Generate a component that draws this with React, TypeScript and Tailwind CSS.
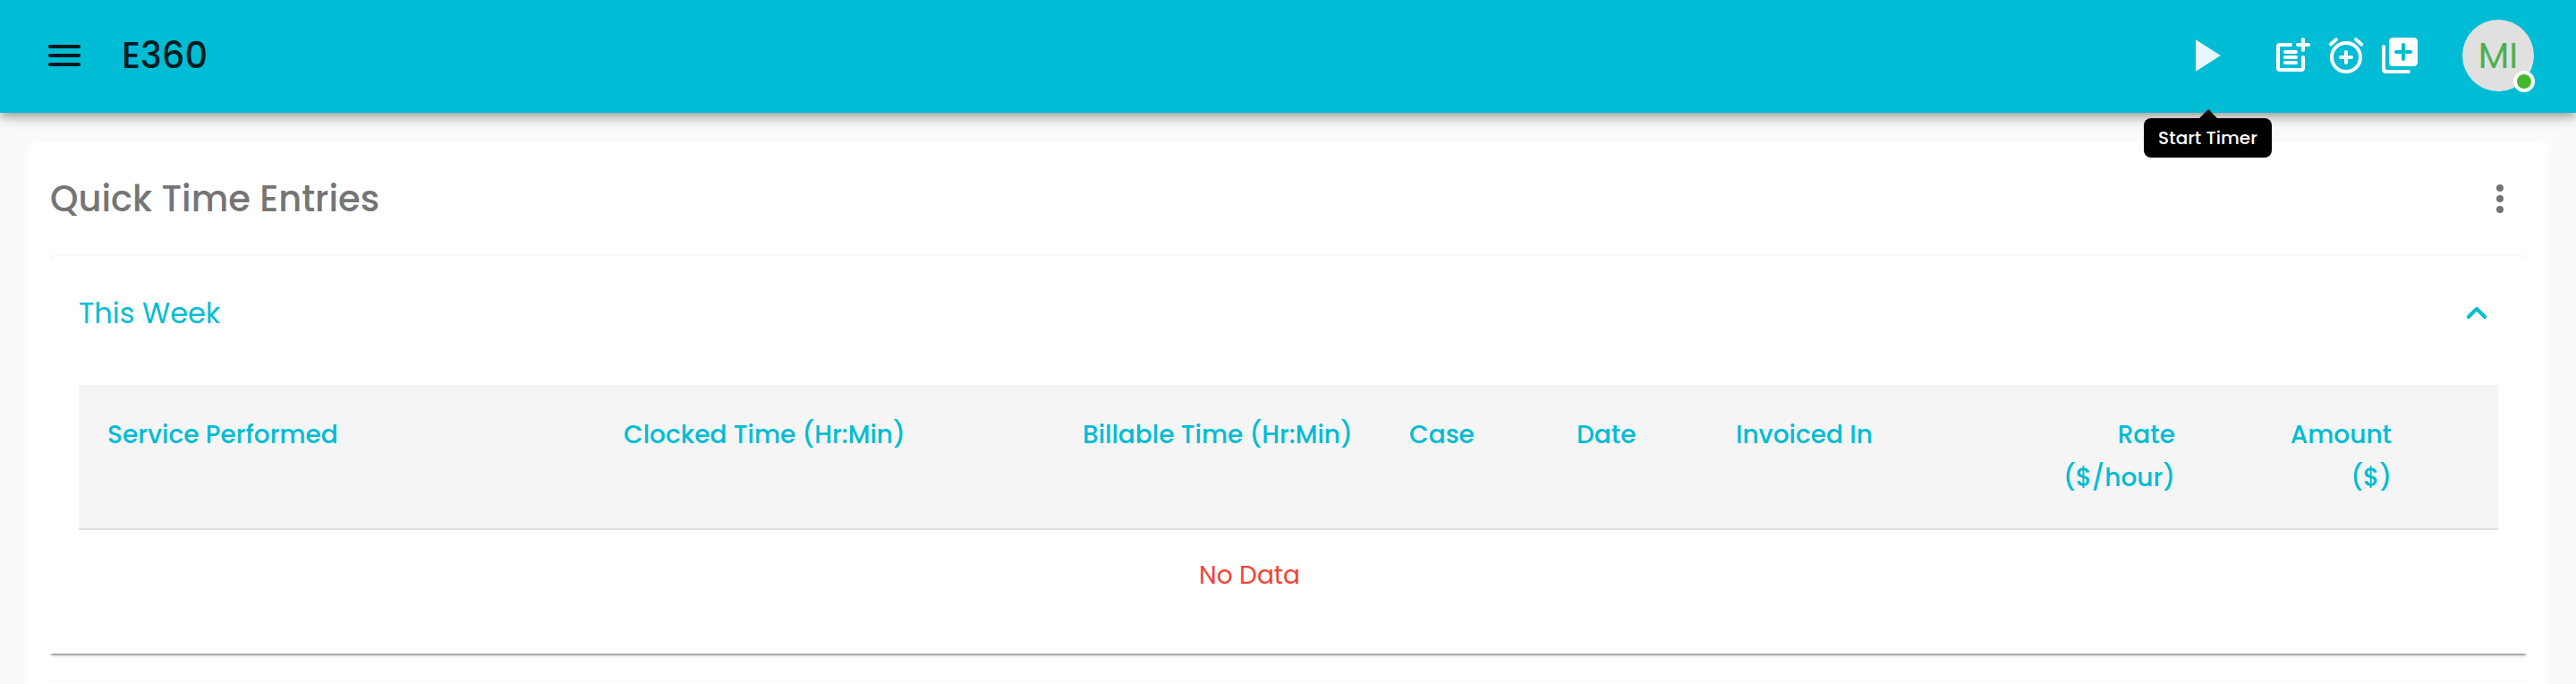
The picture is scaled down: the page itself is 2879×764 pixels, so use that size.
import type { ReactNode } from "react";

function Icon({ className = "", children }: { className?: string; children: ReactNode }) {
  return (
    <svg viewBox="0 0 24 24" className={`size-12 shrink-0 ${className}`} fill="currentColor" aria-hidden="true">
      {children}
    </svg>
  );
}

function MenuIcon() {
  return (
    <Icon className="text-black/87">
      <path d="M4 18h16c.55 0 1-.45 1-1s-.45-1-1-1H4c-.55 0-1 .45-1 1s.45 1 1 1zm0-5h16c.55 0 1-.45 1-1s-.45-1-1-1H4c-.55 0-1 .45-1 1s.45 1 1 1zM3 7c0 .55.45 1 1 1h16c.55 0 1-.45 1-1s-.45-1-1-1H4c-.55 0-1 .45-1 1z" />
    </Icon>
  );
}

function PostAddIcon() {
  return (
    <Icon>
      <path
        d="M11 6H5a1 1 0 0 0-1 1v12a1 1 0 0 0 1 1h12a1 1 0 0 0 1-1v-6M8 10h6M8 13h6M8 16h6M15 6h6M18 3v6"
        fill="none"
        stroke="currentColor"
        strokeWidth="2"
        strokeLinecap="round"
      />
    </Icon>
  );
}

function AlarmAddIcon() {
  return (
    <Icon>
      <g fill="none" stroke="currentColor" strokeWidth="2" strokeLinecap="round">
        <circle cx="12" cy="13" r="8" />
        <path d="M9 13h6M12 10v6M3.4 5.8 6.5 3.1M20.6 5.8 17.5 3.1" />
      </g>
    </Icon>
  );
}

function LibraryAddIcon() {
  return (
    <Icon>
      <path d="M3 6c-.55 0-1 .45-1 1v13c0 1.1.9 2 2 2h13c.55 0 1-.45 1-1s-.45-1-1-1H5c-.55 0-1-.45-1-1V7c0-.55-.45-1-1-1zm17-4H8c-1.1 0-2 .9-2 2v12c0 1.1.9 2 2 2h12c1.1 0 2-.9 2-2V4c0-1.1-.9-2-2-2zm-2 9h-3v3c0 .55-.45 1-1 1s-1-.45-1-1v-3h-3c-.55 0-1-.45-1-1s.45-1 1-1h3V6c0-.55.45-1 1-1s1 .45 1 1v3h3c.55 0 1 .45 1 1s-.45 1-1 1z" />
    </Icon>
  );
}

function StartTimer() {
  return (
    <button type="button" aria-label="Start Timer" className="relative flex w-7 items-center justify-center">
      <svg viewBox="0 0 28 36" className="h-9 w-7 text-white/90" fill="currentColor" aria-hidden="true">
        <path d="M0 .3v35.4L27.8 18z" />
      </svg>
      <span className="absolute top-[88px] -left-[58px] flex h-11 w-[143px] items-center justify-center rounded-lg bg-black text-[20px] leading-none font-medium whitespace-nowrap text-white">
        <span className="absolute -top-[7px] left-[65px] size-[14px] rotate-45 bg-black" />
        <span className="relative">Start Timer</span>
      </span>
    </button>
  );
}

function Header() {
  return (
    <header className="relative z-10 flex h-[126px] items-center bg-[#00bcd4] pr-[47px] pb-[2px] pl-12 shadow-[0_4px_8px_-2px_rgba(0,0,0,0.2),0_8px_10px_0_rgba(0,0,0,0.14),0_2px_20px_0_rgba(0,0,0,0.12)]">
      <MenuIcon />
      <h1 className="ml-10 text-[40px] leading-[64px] font-medium text-black/87">E360</h1>
      <div className="ml-auto flex h-9 items-center text-white">
        <StartTimer />
        <div className="ml-14 flex gap-3">
          <PostAddIcon />
          <AlarmAddIcon />
          <LibraryAddIcon />
        </div>
        <div className="relative ml-[46px] flex size-20 items-center justify-center rounded-full bg-[#e0e0e0] text-[40px] leading-none text-[#4caf50]">
          MI
          <span className="absolute -right-[1px] -bottom-[1px] size-6 rounded-full border-4 border-white bg-[#44b72b]" />
        </div>
      </div>
    </header>
  );
}

const columns = [
  { label: "Service Performed", className: "w-[577px] pl-8" },
  { label: "Clocked Time (Hr:Min)", className: "w-[513px] pl-8" },
  { label: "Billable Time (Hr:Min)", className: "w-[365px] pl-8" },
  { label: "Case", className: "w-[187px] pl-8" },
  { label: "Date", className: "w-[178px] pl-8" },
  { label: "Invoiced In", className: "w-[313px] pl-8" },
  { label: "Rate", unit: "($/hour)", className: "w-[242px] pr-8 text-right" },
  { label: "Amount", unit: "($)", className: "w-[242px] pr-8 text-right" },
];

function TimeTable() {
  return (
    <div className="text-[28px] leading-[48px]">
      <div className="flex h-[162px] border-b-2 border-[#e0e0e0] bg-[#f5f5f5] py-8 font-medium text-[#00bcd4]">
        {columns.map(({ label, unit, className }) => (
          <div key={label} className={`shrink-0 whitespace-nowrap ${className}`}>
            <div>{label}</div>
            {unit && <div>{unit}</div>}
          </div>
        ))}
      </div>
      <div className="flex h-[102px] w-[2617px] items-center justify-center text-[#f44336]">No Data</div>
    </div>
  );
}

const panelShadow =
  "shadow-[0_4px_2px_-2px_rgba(0,0,0,0.2),0_2px_2px_0_rgba(0,0,0,0.14),0_2px_6px_0_rgba(0,0,0,0.12)]";

export default function App() {
  return (
    <div className="h-[764px] w-[2879px] overflow-hidden bg-[#fafafa] font-['Poppins','Inter',sans-serif]">
      <Header />
      <main className="mt-8 mr-[31px] ml-8 h-[700px] rounded-lg bg-white px-6">
        <div className="flex h-32 items-center justify-between pr-[6px]">
          <h2 className="text-[40px] leading-[64px] font-medium text-[#757575]">Quick Time Entries</h2>
          <Icon className="text-[#757575]">
            <circle cx="12" cy="6" r="2" />
            <circle cx="12" cy="12" r="2" />
            <circle cx="12" cy="18" r="2" />
          </Icon>
        </div>
        <div className="-mt-4 h-[590px] overflow-hidden pt-4">
          <section className={`h-[444px] rounded-t-lg bg-white px-8 ${panelShadow}`}>
            <div className="mb-4 flex h-32 items-center justify-between text-[#00bcd4]">
              <h3 className="text-[32px] leading-[48px]">This Week</h3>
              <Icon>
                <path d="M11.29 8.71L6.7 13.3c-.39.39-.39 1.02 0 1.41.39.39 1.02.39 1.41 0L12 10.83l3.88 3.88c.39.39 1.02.39 1.41 0 .39-.39.39-1.02 0-1.41L12.7 8.71c-.38-.39-1.02-.39-1.41 0z" />
              </Icon>
            </div>
            <TimeTable />
          </section>
          <section className={`mt-8 h-32 bg-white ${panelShadow}`} />
        </div>
      </main>
    </div>
  );
}
